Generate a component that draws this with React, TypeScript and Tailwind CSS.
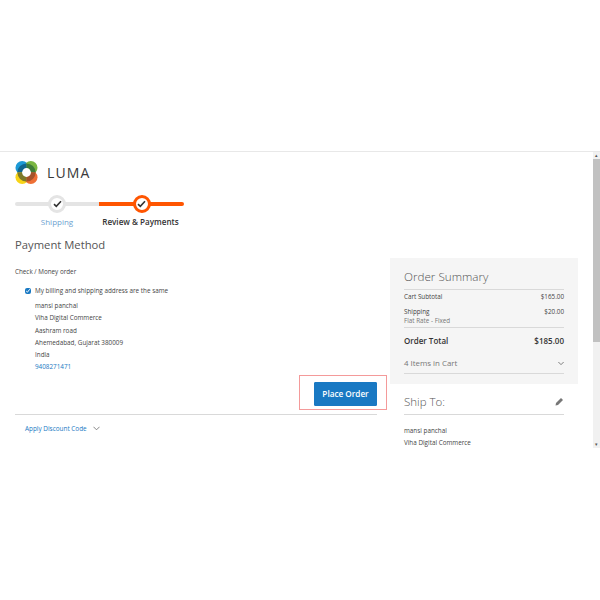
import React from "react";

const Check = () => (
  <svg width="9" height="8" viewBox="0 0 9 8" className="block">
    <path d="M1 4.2 L3.3 6.4 L8 1.2" fill="none" stroke="#333" strokeWidth="1.6" />
  </svg>
);

const Logo = () => (
  <svg width="23" height="23" viewBox="0 0 24 24" className="block">
    <circle cx="7.5" cy="7" r="7" fill="#1d9ad6" />
    <circle cx="16.5" cy="7" r="7" fill="#7ab642" />
    <circle cx="7.5" cy="17" r="7" fill="#f7d417" />
    <circle cx="16.5" cy="17" r="7" fill="#ee6f35" />
    <path d="M12 2.5 A9.5 9.5 0 0 1 21.5 12 L12 12 Z" fill="#3f7d3a" />
    <path d="M2.5 12 A9.5 9.5 0 0 1 12 2.5 L12 12 Z" fill="#11668f" />
    <path d="M21.5 12 A9.5 9.5 0 0 1 12 21.5 L12 12 Z" fill="#a5532a" />
    <path d="M12 21.5 A9.5 9.5 0 0 1 2.5 12 L12 12 Z" fill="#7d7a2a" />
    <circle cx="12" cy="12" r="4.6" fill="#fff" />
  </svg>
);

const Chevron = ({ color = "#666", w = 8 }: { color?: string; w?: number }) => (
  <svg width={w} height="5" viewBox="0 0 8 5" className="block">
    <path d="M0.5 0.5 L4 4 L7.5 0.5" fill="none" stroke={color} strokeWidth="1" />
  </svg>
);

const Pencil = () => (
  <svg width="9" height="9" viewBox="0 0 9 9" className="block">
    <path d="M0.5 8.5 L1 6 L6 1 L8 3 L3 8 Z" fill="#777" />
  </svg>
);

export default function App() {
  return (
    <div
      className="relative h-[600px] w-[600px] overflow-hidden bg-white text-[#333]"
      style={{ fontFamily: '"Open Sans", sans-serif' }}
    >
      <div className="h-[151px]" />
      <div className="flex h-[297px] border-t border-[#e8e8e8]">
        <div className="min-w-0 flex-1 overflow-hidden">
          <div className="px-[15px] pt-[9px]">
            <div className="flex h-[23px] items-center gap-[9px]">
              <Logo />
              <span className="text-[14px] font-medium leading-none tracking-[1.1px] text-[#3a3a3a]">LUMA</span>
            </div>
            <div className="mt-[10px] flex h-[33px] w-[169px]">
              <div className="flex w-[84px] flex-col items-center">
                <div className="relative flex h-[20px] w-full items-center justify-center">
                  <div className="absolute left-0 right-0 top-[8px] h-[4px] rounded-l-full bg-[#e4e4e4]" />
                  <div className="relative flex h-[18px] w-[18px] items-center justify-center rounded-full border-[3px] border-[#e4e4e4] bg-white">
                    <Check />
                  </div>
                </div>
                <span className="mt-[2px] text-[8px] leading-[11px] text-[#6d9fd0]">Shipping</span>
              </div>
              <div className="flex w-[85px] flex-col items-center">
                <div className="relative flex h-[20px] w-full items-center justify-center">
                  <div className="absolute left-0 right-0 top-[8px] h-[4px] rounded-r-full bg-[#ff5501]" />
                  <div className="relative flex h-[18px] w-[18px] items-center justify-center rounded-full border-[3px] border-[#ff5501] bg-white">
                    <Check />
                  </div>
                </div>
                <span className="mt-[2px] -translate-x-[1px] whitespace-nowrap text-[8.1px] font-semibold leading-[11px] text-[#333]">Review &amp; Payments</span>
              </div>
            </div>
          </div>
          <div className="flex">
            <div className="w-[390px] shrink-0 pl-[15px] pr-[13px]">
              <h2 className="mt-[10px] text-[11.25px] font-normal leading-[16px] text-[#555]">Payment Method</h2>
              <div className="mt-[14px] text-[6.3px] leading-[10px] text-[#444]">Check / Money order</div>
              <div className="mt-[8px] flex h-[11px] items-center pl-[10px] text-[6.33px] text-[#444]">
                <input type="checkbox" defaultChecked readOnly className="mr-[4px] h-[6px] w-[6px] accent-[#1979c3]" />
                My billing and shipping address are the same
              </div>
              <div className="mt-[4px] pl-[20px] text-[6.33px] leading-[12.3px] text-[#444]">
                <div>mansi panchal</div>
                <div>Viha Digital Commerce</div>
                <div>Aashram road</div>
                <div>Ahemedabad, Gujarat 380009</div>
                <div>India</div>
                <div className="text-[#1979c3]">9408271471</div>
              </div>
              <div className="mt-[8px] flex justify-end">
                <button className="flex h-[24px] w-[63px] items-center justify-center rounded-[1px] border border-[#1979c3] bg-[#1979c3] text-[8.2px] font-semibold text-white">
                  Place Order
                </button>
              </div>
              <div className="mt-[8px] border-t border-[#d9d9d9] pl-[10px] pt-[9px]">
                <div className="flex items-center gap-[6px] text-[6.4px] leading-[10px] text-[#1979c3]">
                  Apply Discount Code
                  <Chevron w={7} color="#777" />
                </div>
              </div>
            </div>
            <div className="mt-[31px] w-[188px] shrink-0">
              <div className="h-[126px] bg-[#f5f5f5] px-[14px] pt-[10px]">
                <h2 className="border-b border-[#d9d9d9] pb-[5px] text-[11.7px] font-light leading-[16px] text-[#555]">Order Summary</h2>
                <div className="mt-[2px] flex justify-between text-[6.3px] leading-[9px] text-[#444]">
                  <span>Cart Subtotal</span>
                  <span>$165.00</span>
                </div>
                <div className="mt-[6px] flex justify-between text-[6.3px] leading-[9px] text-[#444]">
                  <span>Shipping</span>
                  <span>$20.00</span>
                </div>
                <div className="border-b border-[#d9d9d9] pb-[2px] text-[6.3px] leading-[9px] text-[#777]">Flat Rate - Fixed</div>
                <div className="mt-[7px] flex justify-between text-[8px] font-semibold leading-[11px] text-[#333]">
                  <span>Order Total</span>
                  <span>$185.00</span>
                </div>
                <div className="mt-[8px] flex h-[20px] items-center justify-between border-b border-[#d9d9d9] text-[7.9px] text-[#777]">
                  <span>4 Items in Cart</span>
                  <Chevron color="#555" w={6} />
                </div>
              </div>
              <div className="px-[14px] pt-[9px]">
                <div className="flex items-center justify-between border-b border-[#d9d9d9] pb-[4px]">
                  <span className="text-[11.5px] font-light leading-[17px] text-[#555]">Ship To:</span>
                  <Pencil />
                </div>
                <div className="mt-[10px] text-[6.33px] leading-[12.3px] text-[#444]">
                  <div>mansi panchal</div>
                  <div>Viha Digital Commerce</div>
                </div>
              </div>
            </div>
          </div>
        </div>
        <div className="flex w-[7px] shrink-0 flex-col bg-[#f1f1f1]">
          <div className="h-[7px] text-center text-[5px] leading-[7px] text-[#555]">▴</div>
          <div className="h-[183px] bg-[#c1c1c1]" />
          <div className="flex-1" />
          <div className="h-[8px] text-center text-[5px] leading-[8px] text-[#555]">▾</div>
        </div>
      </div>
      <div className="absolute left-[299px] top-[375px] h-[35px] w-[88px] border border-[#f49a9a]" />
    </div>
  );
}
